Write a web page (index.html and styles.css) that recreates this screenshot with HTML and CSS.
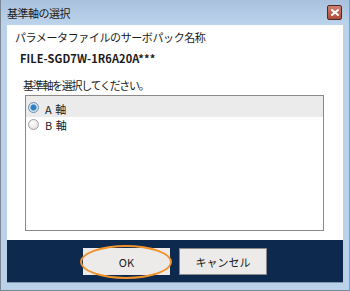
FILE: index.html
```
<!DOCTYPE html>
<html lang="ja">
<head>
    <meta charset="UTF-8">
    <title>基準軸の選択</title>
    <link rel="stylesheet" href="styles.css">
</head>
<body>

<div class="window">
    <div class="titlebar">
        <span class="title">基準軸の選択</span>
        <button type="button" class="close" aria-label="閉じる">
            <svg width="8" height="7" viewBox="0 0 8 7">
                <path d="M1 1 L7 6 M7 1 L1 6" stroke="#fff" stroke-width="2" stroke-linecap="square"/>
            </svg>
        </button>
    </div>
    <div class="client">
        <div class="content">
            <div class="label">パラメータファイルのサーボパック名称</div>
            <div class="file-name">FILE-SGD7W-1R6A20A***</div>
            <div class="prompt">基準軸を選択してください。</div>
            <div class="listbox">
                <label class="row selected">
                    <span class="radio checked"></span>
                    <span class="axis">A 軸</span>
                </label>
                <label class="row">
                    <span class="radio"></span>
                    <span class="axis">B 軸</span>
                </label>
            </div>
        </div>
        <div class="footer">
            <div class="btn-wrap">
                <button type="button" class="btn">OK</button>
                <span class="highlight"></span>
            </div>
            <button type="button" class="btn cancel">キャンセル</button>
        </div>
    </div>
</div>

</body>
</html>
```

FILE: styles.css
```
body {
    margin: 0;
    font-family: "Noto Sans CJK JP", "Noto Sans", sans-serif;
    font-size: 11px;
    color: #1a1a1a;
}
.window {
    width: 350px;
    height: 291px;
    box-sizing: border-box;
    background: #bad1ea;
    border-left: 1px solid #7b8794;
    border-right: 1px solid #3fb3d6;
    border-bottom: 1px solid #7d8a96;
    display: flex;
    flex-direction: column;
}
.titlebar {
    height: 25px;
    flex: 0 0 25px;
    display: flex;
    align-items: center;
    justify-content: space-between;
    padding: 0 7px 0 6px;
    background: linear-gradient(#a9c1dd, #bcd3eb);
}
.title {
    letter-spacing: -0.5px;
    margin-top: 1px;
}
.close {
    width: 15px;
    height: 15px;
    padding: 0;
    margin-top: -1px;
    border: 1px solid #4b2a2c;
    border-radius: 2px;
    background: linear-gradient(#d08070, #b04a38);
    display: flex;
    align-items: center;
    justify-content: center;
}
.client {
    margin: 0 6px;
    flex: 1;
    display: flex;
    flex-direction: column;
    border-bottom: 6px solid #bad1ea;
}
.content {
    height: 215px;
    background: white;
    padding: 5px 0 0 8px;
    box-sizing: border-box;
}
.label {
    line-height: 14px;
    letter-spacing: -0.4px;
}
.file-name {
    margin: 7px 0 0 5px;
    line-height: 14px;
    font-weight: bold;
    letter-spacing: 0.1px;
}
.prompt {
    margin: 13px 0 0 8px;
    line-height: 14px;
    letter-spacing: -1.3px;
}
.listbox {
    margin: 3px 0 0 10px;
    width: 299px;
    height: 136px;
    box-sizing: border-box;
    border: 1px solid #8a8a8a;
}
.row {
    display: flex;
    align-items: center;
    gap: 6px;
    height: 15px;
    padding-left: 2px;
}
.row.selected {
    height: 21px;
    box-sizing: border-box;
    padding-top: 2px;
    background: #ebebeb;
}
.radio {
    width: 9px;
    height: 9px;
    border: 1px solid #a0a0a0;
    border-radius: 50%;
    background: radial-gradient(circle at 40% 35%, #fff, #d8d8d8);
}
.radio.checked {
    border-color: #6c8fb0;
    background: radial-gradient(circle, #2f7fc4 0 2.5px, #cfe0ee 3.5px, #e9eff4);
}
.axis {
    letter-spacing: 0.5px;
}
.selected .axis {
    padding-top: 2px;
}
.footer {
    height: 43px;
    box-sizing: border-box;
    background: #0d2a4e;
    border-bottom: 1px solid #8095b0;
    display: flex;
    justify-content: center;
    gap: 9px;
    padding-top: 8px;
}
.btn-wrap {
    position: relative;
    height: 27px;
}
.btn {
    width: 87px;
    height: 27px;
    padding: 0;
    border: none;
    background: #ecebe9;
    font-family: "Noto Sans CJK JP", "Noto Sans", sans-serif;
    font-size: 11px;
    color: #1a1a1a;
}
.cancel {
    width: 88px;
    border: 1px solid #8a8a8a;
}
.highlight {
    position: absolute;
    left: -3px;
    top: -3px;
    width: 92px;
    height: 34px;
    box-sizing: border-box;
    border: 2px solid #f0922c;
    border-radius: 50%;
}
```
